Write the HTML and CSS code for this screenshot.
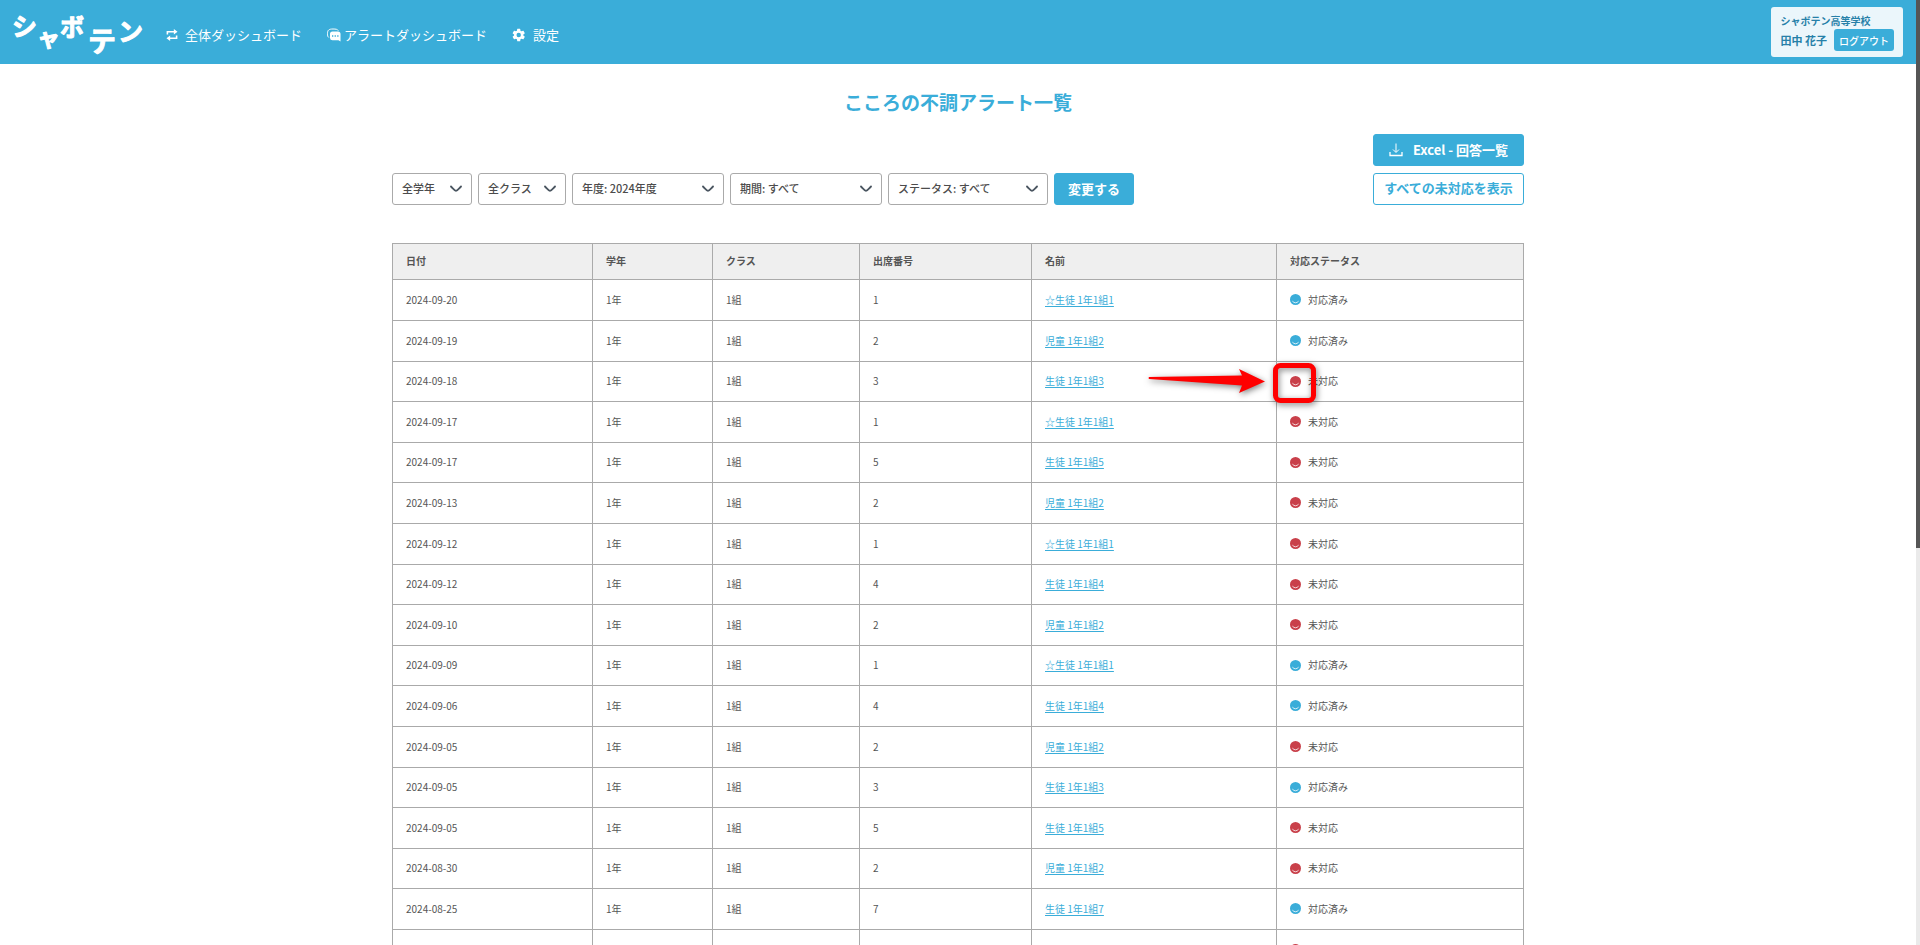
FILE: index.html
```html
<!DOCTYPE html>
<html lang="ja">
<head>
    <meta charset="UTF-8">
    <meta name="viewport" content="width=device-width, initial-scale=1.0">
    <title>こころの不調アラート一覧</title>
    <link rel="stylesheet" href="styles.css">
</head>
<body>
    <svg class="symbols" aria-hidden="true">
        <symbol id="chevron" viewBox="0 0 12 8">
            <path d="M1 1.5 C3 3.5 4.5 5.8 6 5.8 S9 3.5 11 1.5" fill="none" stroke="currentColor" stroke-width="1.8" stroke-linecap="round"/>
        </symbol>
        <symbol id="face" viewBox="0 0 11 11">
            <circle cx="5.5" cy="5.5" r="5.5" fill="currentColor"/>
            <path d="M2.4 7.2 Q5.5 10.4 8.6 7.2" fill="none" stroke="#fff" stroke-width="0.8"/>
        </symbol>
    </svg>

    <header class="header">
        <a href="#" class="logo" aria-label="シャボテン">
            <svg width="132" height="64" viewBox="0 0 132 64">
                <text x="0" y="36" font-size="25">シ</text>
                <text x="25" y="46" font-size="23">ャ</text>
                <text x="48" y="36" font-size="24">ボ</text>
                <text x="76" y="52" font-size="28">テ</text>
                <text x="106" y="41" font-size="25">ン</text>
            </svg>
        </a>
        <nav class="nav">
            <a href="#">
                <svg class="nav-icon" width="12" height="14" viewBox="0 0 13 13">
                    <path d="M1.500 6V3H9M11.500 7v3H4" fill="none" stroke="#fff" stroke-width="1.7"/>
                    <path d="M8.500 0l4 3-4 3zM4.500 7l-4 3 4 3z" fill="#fff"/>
                </svg>
                全体ダッシュボード
            </a>
            <a href="#" class="nav-alert">
                <svg class="nav-icon" width="14" height="14" viewBox="0 0 14 14">
                    <path d="M1.8 9.5C0.6 8.5 0.5 7.5 0.5 5.5C0.5 2 2 1 6 1C9 1 10.5 1.3 11.3 2.6" fill="none" stroke="#fff"/>
                    <path d="M5.5 3.5h5.5q2.5 0 2.5 2.5v7.5l-2-1.2H5.5Q3 12.3 3 10V6Q3 3.5 5.5 3.5z" fill="#fff"/>
                    <path d="M5 8h1.3M7.6 8h1.3M10.2 8h1.3" stroke="#3aadd9" stroke-width="1.3"/>
                </svg>
                アラートダッシュボード
            </a>
            <a href="#">
                <svg class="nav-icon" width="14" height="14" viewBox="0 0 24 24">
                    <path fill="#fff" d="M19.4 13a7.5 7.5 0 0 0 0-2l2.3-1.7a.6.6 0 0 0 .1-.7l-2.2-3.8a.6.6 0 0 0-.7-.2l-2.6 1a8 8 0 0 0-1.8-1L14.1 1.8a.6.6 0 0 0-.6-.5h-4a.6.6 0 0 0-.6.5L8.5 4.6a8 8 0 0 0-1.8 1l-2.6-1a.6.6 0 0 0-.7.2L1.2 8.600a.6.6 0 0 0 .1.7L3.6 11a7.5 7.5 0 0 0 0 2l-2.3 1.7a.6.6 0 0 0-.1.7l2.2 3.8c.1.2.4.3.7.2l2.6-1a8 8 0 0 0 1.8 1l.4 2.8c0 .3.3.5.6.5h4c.3 0 .6-.2.6-.5l.4-2.8a8 8 0 0 0 1.8-1l2.6 1c.3.1.6 0 .7-.2l2.2-3.8a.6.6 0 0 0-.1-.7zM11.5 15.8a3.800 3.800 0 1 1 0-7.600 3.800 3.800 0 0 1 0 7.600z"/>
                </svg>
                設定
            </a>
        </nav>
        <div class="user-box">
            <div class="school">シャボテン高等学校</div>
            <div class="user-row">
                <span class="user-name">田中 花子</span>
                <button type="button" class="logout">ログアウト</button>
            </div>
        </div>
    </header>

    <main class="container">
        <h1>こころの不調アラート一覧</h1>

        <div class="toolbar">
            <form class="filters">
                <div class="select select-grade">
                    <select aria-label="学年"><option>全学年</option></select>
                    <svg width="12" height="8"><use href="#chevron"/></svg>
                </div>
                <div class="select select-class">
                    <select aria-label="クラス"><option>全クラス</option></select>
                    <svg width="12" height="8"><use href="#chevron"/></svg>
                </div>
                <div class="select select-year">
                    <select aria-label="年度"><option>年度: 2024年度</option></select>
                    <svg width="12" height="8"><use href="#chevron"/></svg>
                </div>
                <div class="select select-year">
                    <select aria-label="期間"><option>期間: すべて</option></select>
                    <svg width="12" height="8"><use href="#chevron"/></svg>
                </div>
                <div class="select select-status">
                    <select aria-label="ステータス"><option>ステータス: すべて</option></select>
                    <svg width="12" height="8"><use href="#chevron"/></svg>
                </div>
                <button type="button" class="btn btn-change">変更する</button>
            </form>
            <div class="actions">
                <button type="button" class="btn">
                    <svg width="14" height="14" viewBox="0 0 14 14" fill="none" stroke="#fff">
                        <path d="M7 0.5V9M4 6.5L7 9.5L10 6.5"/>
                        <path d="M1 9v3.5h12V9" stroke-width="1.3"/>
                    </svg>
                    Excel - 回答一覧
                </button>
                <button type="button" class="btn btn-outline">すべての未対応を表示</button>
            </div>
        </div>

        <table class="alerts">
            <thead>
                <tr>
                    <th class="col-date">日付</th>
                    <th class="col-grade">学年</th>
                    <th class="col-class">クラス</th>
                    <th class="col-number">出席番号</th>
                    <th class="col-name">名前</th>
                    <th>対応ステータス</th>
                </tr>
            </thead>
            <tbody id="alertRows"></tbody>
        </table>
    </main>

    <div class="scroll-track"><div class="scroll-thumb"></div></div>

    <!-- Arrow and frame pointing at a status icon -->
    <template id="pointer">
        <svg class="pointer" width="176" height="52" viewBox="0 0 176 52" aria-hidden="true">
            <path d="M1 23Q0 24 1 25L94 31.500L91 39L117 27.500L91 15L94 21.500z" fill="#f00"/>
            <rect x="127.500" y="11.500" width="38" height="35" rx="5" fill="none" stroke="#f00" stroke-width="5"/>
        </svg>
    </template>

    <script>
        // [date, number, name, done]
        const alerts = [
            ['2024-09-20', 1, '☆生徒 1年1組1', true],
            ['2024-09-19', 2, '児童 1年1組2', true],
            ['2024-09-18', 3, '生徒 1年1組3', false],
            ['2024-09-17', 1, '☆生徒 1年1組1', false],
            ['2024-09-17', 5, '生徒 1年1組5', false],
            ['2024-09-13', 2, '児童 1年1組2', false],
            ['2024-09-12', 1, '☆生徒 1年1組1', false],
            ['2024-09-12', 4, '生徒 1年1組4', false],
            ['2024-09-10', 2, '児童 1年1組2', false],
            ['2024-09-09', 1, '☆生徒 1年1組1', true],
            ['2024-09-06', 4, '生徒 1年1組4', true],
            ['2024-09-05', 2, '児童 1年1組2', false],
            ['2024-09-05', 3, '生徒 1年1組3', true],
            ['2024-09-05', 5, '生徒 1年1組5', false],
            ['2024-08-30', 2, '児童 1年1組2', false],
            ['2024-08-25', 7, '生徒 1年1組7', true],
            ['2024-08-23', 4, '生徒 1年1組4', false]
        ];

        const tbody = document.getElementById('alertRows');

        alerts.forEach(function ([date, number, name, done]) {
            const row = tbody.insertRow();
            row.innerHTML =
                '<td>' + date + '</td>' +
                '<td>1年</td>' +
                '<td>1組</td>' +
                '<td>' + number + '</td>' +
                '<td><a href="#">' + name + '</a></td>' +
                '<td class="status-cell"><span class="status ' + (done ? 'done' : 'open') + '">' +
                '<svg width="11" height="11"><use href="#face"/></svg>' +
                (done ? '対応済み' : '未対応') + '</span></td>';
        });

        tbody.rows[2].cells[5].appendChild(document.getElementById('pointer').content.cloneNode(true));
    </script>
</body>
</html>
```
FILE: styles.css
```css
* {
    box-sizing: border-box;
}

body {
    margin: 0;
    height: 100vh;
    padding-right: 4px;
    overflow: hidden;
    background-color: #fff;
    color: #555;
    font-family: "Noto Sans CJK JP", sans-serif;
    font-size: 10px;
}

button,
select {
    font-family: inherit;
}

.symbols {
    display: none;
}

/* Header */
.header {
    display: flex;
    align-items: center;
    height: 64px;
    padding: 0 13px 0 12px;
    background-color: #3aadd9;
}

.logo {
    height: 64px;
}

.logo text {
    fill: #fff;
    stroke: #fff;
    stroke-width: 1;
    stroke-linejoin: round;
    font-weight: bold;
}

.nav {
    display: flex;
    gap: 25px;
    margin-left: 22px;
    padding-top: 6px;
}

.nav a {
    display: flex;
    align-items: center;
    gap: 7px;
    color: #fff;
    font-size: 13px;
    line-height: 20px;
    text-decoration: none;
}

.nav .nav-alert {
    gap: 3px;
}

.user-box {
    margin-left: auto;
    height: 50px;
    padding: 6px 9px 6px 10px;
    border-radius: 3px;
    background-color: #ebf6fb;
    color: #2680a8;
    font-weight: bold;
}

.school {
    line-height: 16px;
}

.user-row {
    display: flex;
    align-items: center;
    gap: 7px;
}

.user-name {
    font-size: 11px;
    line-height: 20px;
}

.logout {
    width: 60px;
    height: 22px;
    padding: 0;
    border: none;
    border-radius: 3px;
    background-color: #3aadd9;
    color: #fff;
    font-size: 10px;
    font-weight: 500;
}

/* Main */
.container {
    max-width: 1132px;
    margin: 0 auto;
}

h1 {
    margin: 23px 0 17px;
    color: #3aadd9;
    font-size: 19px;
    font-weight: bold;
    line-height: 30px;
    text-align: center;
}

.toolbar {
    display: flex;
    justify-content: space-between;
    align-items: flex-end;
    margin-bottom: 38px;
}

.filters {
    display: flex;
    gap: 6px;
}

.select {
    position: relative;
}

.select select {
    appearance: none;
    width: 100%;
    height: 32px;
    padding: 0 9px 2px;
    border: 1px solid #aaa;
    border-radius: 3px;
    background-color: #fff;
    color: #4c4c4c;
    font-size: 11px;
    font-weight: 500;
}

.select svg {
    position: absolute;
    top: 12px;
    right: 10px;
    color: #4a5560;
    pointer-events: none;
}

.select-grade {
    width: 80px;
}

.select-class {
    width: 88px;
}

.select-year {
    width: 152px;
}

.select-status {
    width: 160px;
}

.btn {
    display: flex;
    align-items: center;
    justify-content: center;
    gap: 10px;
    height: 32px;
    padding: 0 10px 1px;
    border: 1px solid #3aadd9;
    border-radius: 3px;
    background-color: #3aadd9;
    color: #fff;
    font-size: 13px;
    font-weight: bold;
    white-space: nowrap;
}

.btn-change {
    width: 80px;
}

.btn-outline {
    padding-bottom: 3px;
    background-color: #fff;
    color: #3aadd9;
}

.actions {
    display: flex;
    flex-direction: column;
    gap: 7px;
    width: 151px;
}

/* Table */
.alerts {
    width: 100%;
    table-layout: fixed;
    border-collapse: collapse;
}

.alerts th,
.alerts td {
    height: 41px;
    padding: 0 13px 1px;
    border: 1px solid #aaa;
    text-align: left;
    line-height: 16px;
}

.alerts th {
    height: 36px;
    background-color: #efefef;
    font-weight: bold;
}

.alerts tr:nth-child(5n+3) td,
.alerts tr:nth-child(5n+5) td {
    height: 40px;
}

.alerts a {
    color: #3aadd9;
    text-underline-offset: 2px;
}

.col-date {
    width: 200px;
}

.col-grade {
    width: 120px;
}

.col-class {
    width: 147px;
}

.col-number {
    width: 172px;
}

.col-name {
    width: 245px;
}

.status {
    display: flex;
    align-items: center;
    gap: 7px;
}

.done svg {
    color: #3aadd9;
}

.open svg {
    color: #c9404a;
}

.status-cell {
    position: relative;
}

.pointer {
    position: absolute;
    top: -8px;
    left: -129px;
    filter: drop-shadow(1px 2px 3px rgba(0, 0, 0, 0.5));
}

/* Scrollbar */
.scroll-track {
    position: fixed;
    top: 0;
    right: 0;
    bottom: 0;
    width: 4px;
    background-color: #eaeaea;
}

.scroll-thumb {
    height: 58%;
    background-color: #555;
}
```
